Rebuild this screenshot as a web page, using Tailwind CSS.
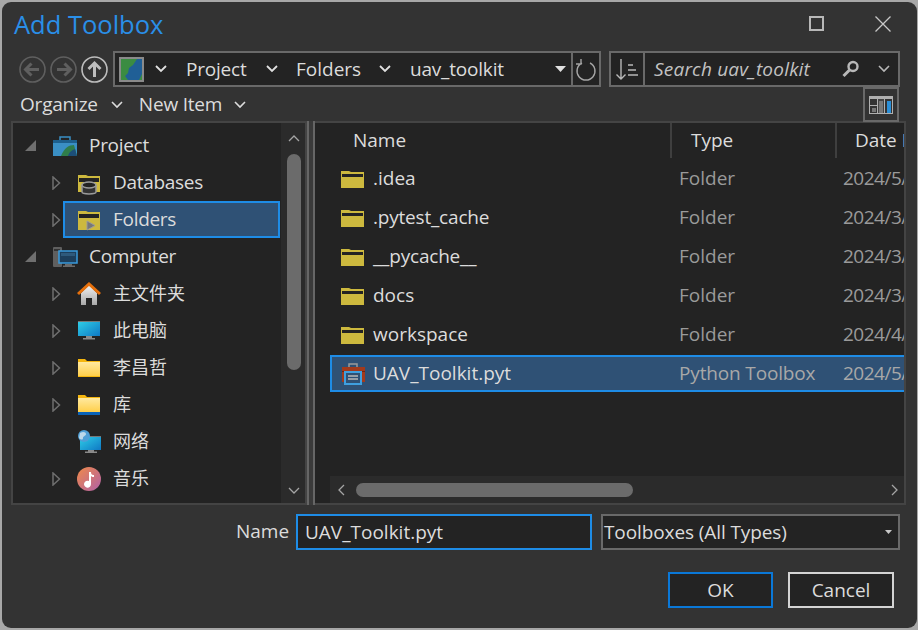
<!doctype html>
<html><head><meta charset="utf-8"><script src="https://cdn.jsdelivr.net/npm/@tailwindcss/browser@4"></script></head>
<body class="m-0 overflow-hidden">
<div class="w-[918px] h-[630px] bg-[#a8a8a8] pl-[2px] pr-[1px] pt-[2px] pb-[2px] font-['Open_Sans','Noto_Sans_CJK_SC',sans-serif] text-[19px] text-[#dcdcdc]">
<div class="w-full h-full bg-[#333333] rounded-[9px] flex flex-col overflow-hidden">

<!-- title -->
<div class="h-[49px] shrink-0 flex items-center pl-[12px] pr-[26px]">
  <span class="text-[25.500px] leading-none text-[#2a8fe8] flex-1 -mt-[4px]">Add Toolbox</span>
  <div class="w-[15px] h-[15px] border-2 border-[#b8b8b8] mr-[51px] mb-[6px]"></div>
  <svg class="mb-[6px]" width="16" height="16" viewBox="0 0 16 16" fill="none" stroke="#c8c8c8" stroke-width="1.3"><path d="M.5.5l15 15M15.500.5l-15 15"/></svg>
</div>

<!-- nav row -->
<div class="h-[36px] shrink-0 flex items-stretch pl-[17px]">
  <div class="w-[94px] flex items-center gap-[4px] shrink-0">
    <svg width="27" height="27" viewBox="0 0 27 27" fill="none" stroke="#5f5f5f"><circle cx="13.5" cy="13.5" r="12.5" stroke-width="1.6"/><path d="M20 13.5H7M12.5 7.5l-6 6 6 6" stroke-width="3"/></svg>
    <svg width="27" height="27" viewBox="0 0 27 27" fill="none" stroke="#5f5f5f"><circle cx="13.5" cy="13.5" r="12.5" stroke-width="1.6"/><path d="M7 13.5h13M14.5 7.5l6 6-6 6" stroke-width="3"/></svg>
    <svg width="27" height="27" viewBox="0 0 27 27" fill="none" stroke="#bdbdbd"><circle cx="13.5" cy="13.5" r="12.5" stroke-width="1.6"/><path d="M13.5 21V7M7.5 13l6-6 6 6" stroke-width="3"/></svg>
  </div>
  <div class="w-[460px] shrink-0 bg-[#232323] border-2 border-[#696969] flex items-center relative">
    <div class="ml-[4px] w-[25px] h-[25px] border-2 border-[#8a8a8a] bg-[#3b8c42] overflow-hidden shrink-0">
      <svg width="21" height="21" viewBox="0 0 21 21"><path d="M21 0H16L12 6 8 9 7 14 4 17 7 21H18L21 15Z" fill="#205f96"/></svg>
    </div>
    <svg class="ml-[11px] shrink-0" width="12" height="8" viewBox="0 0 12 8" fill="none" stroke="#e0e0e0" stroke-width="1.8"><path d="M1 1l5 5 5-5"/></svg>
    <span class="ml-[19px] w-[80px] shrink-0 tracking-[-0.2px]">Project</span>
    <svg class="shrink-0" width="12" height="8" viewBox="0 0 12 8" fill="none" stroke="#e0e0e0" stroke-width="1.8"><path d="M1 1l5 5 5-5"/></svg>
    <span class="ml-[18px] w-[83px] shrink-0">Folders</span>
    <svg class="shrink-0" width="12" height="8" viewBox="0 0 12 8" fill="none" stroke="#e0e0e0" stroke-width="1.8"><path d="M1 1l5 5 5-5"/></svg>
    <span class="ml-[19px] flex-1 tracking-[-0.2px]">uav_toolkit</span>
    <svg class="mr-[5px] shrink-0" width="11" height="6" viewBox="0 0 11 6"><path d="M0 0h11L5.500 6Z" fill="#e0e0e0"/></svg>
  </div>
  <div class="w-[30px] -ml-[2px] shrink-0 bg-[#232323] border-2 border-[#696969] flex items-center justify-center">
    <svg width="22" height="24" viewBox="0 0 22 24" fill="none" stroke="#a5a5a5" stroke-width="1.4"><path d="M7 5a9 9 0 1 0 8 0M6 1v5H1" transform="translate(0 1)"/></svg>
  </div>
  <div class="ml-[8px] w-[36px] shrink-0 bg-[#232323] border-2 border-[#696969] flex items-center justify-center">
    <svg width="26" height="26" viewBox="0 0 26 26" fill="none" stroke="#b8b8b8" stroke-width="1.4"><path d="M7 3v20M2.5 18.5 7 23l4.500-4.500M14 9h5M14 14h8M14 19h10"/></svg>
  </div>
  <div class="w-[257px] -ml-[2px] shrink-0 bg-[#232323] border-2 border-[#696969] flex items-center pl-[9px]">
    <span class="italic text-[#c2c2c2] flex-1 tracking-[0.2px]">Search uav_toolkit</span>
    <svg class="-ml-[8px]" width="18" height="18" viewBox="0 0 18 18" fill="none" stroke="#b8b8b8"><circle cx="11" cy="6.500" r="4.500" stroke-width="2.400"/><path d="M7.500 10 1.500 16" stroke-width="3"/></svg>
    <svg class="ml-[18px] mr-[8px]" width="12" height="8" viewBox="0 0 12 8" fill="none" stroke="#b8b8b8" stroke-width="1.6"><path d="M1 1l5 5 5-5"/></svg>
  </div>
</div>

<!-- organize row -->
<div class="h-[35px] shrink-0 flex items-center pl-[18px] relative tracking-[-0.2px]">
  <span>Organize</span>
  <svg class="ml-[13px]" width="12" height="8" viewBox="0 0 12 8" fill="none" stroke="#dcdcdc" stroke-width="1.6"><path d="M1 1l5 5 5-5"/></svg>
  <span class="ml-[16px]">New Item</span>
  <svg class="ml-[12px]" width="12" height="8" viewBox="0 0 12 8" fill="none" stroke="#dcdcdc" stroke-width="1.6"><path d="M1 1l5 5 5-5"/></svg>
  <div class="ml-auto mr-[18px] w-[36px] h-[35px] border-2 border-[#696969] flex items-center justify-center">
    <svg width="24" height="18" viewBox="0 0 24 18"><rect width="24" height="18" fill="#b0b0b0"/><rect x="1" y="3" width="7" height="6" fill="#333"/><rect x="1" y="10" width="7" height="7" fill="#333"/><rect x="3" y="12" width="4" height="4" fill="#777"/><rect x="9" y="3" width="6" height="14" fill="#444"/><rect x="10" y="5" width="4" height="12" fill="#777"/><rect x="16" y="3" width="7" height="14" fill="#333"/><rect x="18" y="5" width="4" height="12" fill="#2a8fd8"/></svg>
  </div>
</div>

<!-- panels -->
<div class="h-[384px] shrink-0 flex pl-[9px] pr-[11px] -mt-px">
  <!-- tree -->
  <div class="w-[296px] shrink-0 border-2 border-[#444444] bg-[#232323] flex tracking-[-0.3px]">
    <div class="flex-1 min-w-0 flex flex-col pt-[4px] pl-[2px]">
      <div class="h-[37px] flex items-center"><svg class="ml-[10px] mr-[17px]" width="11" height="11" viewBox="0 0 11 11"><path d="M11 0V11H0Z" fill="#6f6f6f"/></svg>
        <svg width="24" height="20" viewBox="0 0 24 20"><rect x="0" y="4" width="24" height="16" fill="#3a8fc4"/><path d="M7 4V1h10v3" fill="none" stroke="#3a8fc4" stroke-width="1.500"/><rect x="0" y="4" width="24" height="3" fill="#1d5f8c"/><path d="M8 20c3-8 8-11 13-11l3 11Z" fill="#2f7d4a"/><path d="M15 20c1-4 4-6 7-7l2 7Z" fill="#1c4e78"/></svg>
        <span class="ml-[12px]">Project</span></div>
      <div class="h-[37px] flex items-center"><svg class="ml-[37px] mr-[16px]" width="9" height="14" viewBox="0 0 9 14" fill="none" stroke="#6f6f6f" stroke-width="1.500"><path d="M1 1l6.500 6L1 13Z"/></svg>
        <svg width="24" height="24" viewBox="0 0 24 24"><path d="M1 4h8l2 1h12v16H1Z" fill="#cdb93e"/><rect x="2" y="7" width="20" height="4" fill="#232323"/><path d="M5 14v7c0 2.500 14 2.500 14 0v-7" fill="#333" stroke="#9a9a9a" stroke-width="1.500"/><ellipse cx="12" cy="14" rx="7" ry="3" fill="#232323" stroke="#9a9a9a" stroke-width="1.500"/></svg>
        <span class="ml-[12px]">Databases</span></div>
      <div class="h-[37px] flex items-center"><svg class="ml-[37px] mr-[-12px] shrink-0" width="9" height="14" viewBox="0 0 9 14" fill="none" stroke="#6f6f6f" stroke-width="1.500"><path d="M1 1l6.500 6L1 13Z"/></svg>
        <div class="h-[37px] w-[217px] ml-[14px] bg-[#2f5175] border-2 border-[#1e8ce6] flex items-center pl-[12px] shrink-0">
        <svg width="24" height="22" viewBox="0 0 24 22"><path d="M1 2h8l2 1h12v18H1Z" fill="#cdb93e"/><rect x="2" y="5" width="20" height="4" fill="#232323"/><path d="M10 12l8 4.500-8 4.500Z" fill="#777" stroke="#9a9a9a"/></svg>
        <span class="ml-[12px]">Folders</span></div></div>
      <div class="h-[37px] flex items-center"><svg class="ml-[10px] mr-[17px]" width="11" height="11" viewBox="0 0 11 11"><path d="M11 0V11H0Z" fill="#6f6f6f"/></svg>
        <svg width="25" height="20" viewBox="0 0 25 20"><rect x="0" y="0" width="9" height="20" rx="1" fill="#5f5f5f"/><rect x="1" y="2" width="6" height="2" fill="#333"/><rect x="6" y="4" width="18" height="12" fill="#1d3f5c" stroke="#3a9bdc" stroke-width="1.500"/><rect x="8" y="6" width="14" height="3" fill="#2e5a7c"/><path d="M12 17h7v1.500h3v1.500H10v-1.500h2Z" fill="#6a6a6a"/></svg>
        <span class="ml-[11px]">Computer</span></div>
      <div class="h-[37px] flex items-center"><svg class="ml-[37px] mr-[16px]" width="9" height="14" viewBox="0 0 9 14" fill="none" stroke="#6f6f6f" stroke-width="1.500"><path d="M1 1l6.500 6L1 13Z"/></svg>
        <svg width="24" height="24" viewBox="0 0 24 24"><defs><linearGradient id="h" x1="0" y1="0" x2="0" y2="1"><stop stop-color="#f2f2f2"/><stop offset="1" stop-color="#a8a8a8"/></linearGradient></defs><path d="M4 11 12 3l8 8v12h-5v-7H9v7H4Z" fill="url(#h)"/><path d="M1 12 12 2l11 10" fill="none" stroke="#e6700c" stroke-width="3"/></svg>
        <span class="ml-[12px] text-[18px] tracking-normal">主文件夹</span></div>
      <div class="h-[37px] flex items-center"><svg class="ml-[37px] mr-[16px]" width="9" height="14" viewBox="0 0 9 14" fill="none" stroke="#6f6f6f" stroke-width="1.500"><path d="M1 1l6.500 6L1 13Z"/></svg>
        <svg width="24" height="20" viewBox="0 0 24 20"><defs><linearGradient id="m" x1="0" y1="0" x2="1" y2="1"><stop stop-color="#2fd0e8"/><stop offset="1" stop-color="#0f78c4"/></linearGradient></defs><rect x="1" y="0" width="22" height="15" fill="url(#m)"/><rect x="1" y="0" width="22" height="1" fill="#777"/><path d="M9 15h6v2h3v1.500H6V17h3Z" fill="#8a8a8a"/></svg>
        <span class="ml-[12px] text-[18px] tracking-normal">此电脑</span></div>
      <div class="h-[37px] flex items-center"><svg class="ml-[37px] mr-[16px]" width="9" height="14" viewBox="0 0 9 14" fill="none" stroke="#6f6f6f" stroke-width="1.500"><path d="M1 1l6.500 6L1 13Z"/></svg>
        <svg width="24" height="18" viewBox="0 0 24 18"><defs><linearGradient id="f" x1="0" y1="0" x2="0" y2="1"><stop stop-color="#ffe9a0"/><stop offset="1" stop-color="#ffcf4a"/></linearGradient></defs><path d="M1 0h7l2 2h13v16H1Z" fill="#f5b60f"/><rect x="1" y="3" width="22" height="14" fill="url(#f)"/></svg>
        <span class="ml-[12px] text-[18px] tracking-normal">李昌哲</span></div>
      <div class="h-[37px] flex items-center"><svg class="ml-[37px] mr-[16px]" width="9" height="14" viewBox="0 0 9 14" fill="none" stroke="#6f6f6f" stroke-width="1.500"><path d="M1 1l6.500 6L1 13Z"/></svg>
        <svg width="24" height="20" viewBox="0 0 24 20"><path d="M1 0h7l2 2h13v18H1Z" fill="#f5b60f"/><rect x="1" y="3" width="22" height="14" fill="url(#f)"/><rect x="1" y="17" width="22" height="3" fill="#0a63b8"/></svg>
        <span class="ml-[12px] text-[18px] tracking-normal">库</span></div>
      <div class="h-[37px] flex items-center"><div class="w-[62px] shrink-0"></div>
        <svg width="24" height="24" viewBox="0 0 24 24"><rect x="3" y="6" width="21" height="14" fill="url(#m)"/><rect x="3" y="6" width="21" height="1" fill="#777"/><path d="M11 20h6v1.500h3V23H8v-1.500h3Z" fill="#8a8a8a"/><circle cx="7" cy="6" r="6" fill="#4f9fd6"/><path d="M3 3c3-2 6-1 6 1s-3 2-3 4-2 2-4 0Z" fill="#bcd8ea"/></svg>
        <span class="ml-[12px] text-[18px] tracking-normal">网络</span></div>
      <div class="h-[37px] flex items-center"><svg class="ml-[37px] mr-[16px]" width="9" height="14" viewBox="0 0 9 14" fill="none" stroke="#6f6f6f" stroke-width="1.500"><path d="M1 1l6.500 6L1 13Z"/></svg>
        <svg width="24" height="24" viewBox="0 0 24 24"><defs><linearGradient id="n" x1="0" y1="0" x2="1" y2="1"><stop stop-color="#f08a48"/><stop offset="1" stop-color="#b060a8"/></linearGradient></defs><circle cx="12" cy="12" r="12" fill="url(#n)"/><path d="M12 5h2c0 3 2 3 3 3v2c-1 0-2 0-3-1v8a3.500 3.500 0 1 1-2-3Z" fill="#fff"/></svg>
        <span class="ml-[12px] text-[18px] tracking-normal">音乐</span></div>
    </div>
    <div class="w-[24px] shrink-0 bg-[#2b2b2b] flex flex-col items-center pl-[2px]">
      <svg class="mt-[12px]" width="12" height="7" viewBox="0 0 12 7" fill="none" stroke="#a5a5a5" stroke-width="1.300"><path d="M1 6l5-5 5 5"/></svg>
      <div class="mt-[12px] w-[14px] h-[216px] rounded-[7px] bg-[#6b6b6b]"></div>
      <svg class="mt-auto mb-[9px]" width="12" height="7" viewBox="0 0 12 7" fill="none" stroke="#a5a5a5" stroke-width="1.300"><path d="M1 1l5 5 5-5"/></svg>
    </div>
  </div>
  <!-- splitter -->
  <div class="w-[8px] shrink-0 border-x-2 border-[#666666] bg-[#3a3a3a]"></div>
  <!-- list -->
  <div class="flex-1 min-w-0 border-y-2 border-r-2 border-[#444444] bg-[#232323] flex flex-col overflow-hidden">
    <div class="h-[35px] shrink-0 flex items-center">
      <div class="w-[357px] shrink-0 pl-[38px] h-full flex items-center border-r-2 border-[#3f3f3f]">Name</div>
      <div class="w-[165px] shrink-0 pl-[19px] h-full flex items-center border-r-2 border-[#3f3f3f]">Type</div>
      <div class="pl-[18px] whitespace-nowrap">Date Modified</div>
    </div>
    <div class="flex-1 flex flex-col pl-[15px] pt-[1px]">
      <div class="h-[39px] flex items-center whitespace-nowrap shrink-0"><svg class="ml-[11px] shrink-0" width="23" height="18" viewBox="0 0 23 18"><path d="M0 1h8l2 1h13v16H0Z" fill="#cdb93e"/><rect x="1" y="4" width="21" height="3" fill="#232323"/></svg><span class="ml-[9px] w-[306px] shrink-0">.idea</span><span class="w-[164px] shrink-0 text-[#9a9a9a]">Folder</span><span class="text-[#9a9a9a] tracking-[-0.5px] shrink-0">2024/5/</span></div>
      <div class="h-[39px] flex items-center whitespace-nowrap shrink-0"><svg class="ml-[11px] shrink-0" width="23" height="18" viewBox="0 0 23 18"><path d="M0 1h8l2 1h13v16H0Z" fill="#cdb93e"/><rect x="1" y="4" width="21" height="3" fill="#232323"/></svg><span class="ml-[9px] w-[306px] shrink-0 tracking-[-0.2px]">.pytest_cache</span><span class="w-[164px] shrink-0 text-[#9a9a9a]">Folder</span><span class="text-[#9a9a9a] tracking-[-0.5px] shrink-0">2024/3/</span></div>
      <div class="h-[39px] flex items-center whitespace-nowrap shrink-0"><svg class="ml-[11px] shrink-0" width="23" height="18" viewBox="0 0 23 18"><path d="M0 1h8l2 1h13v16H0Z" fill="#cdb93e"/><rect x="1" y="4" width="21" height="3" fill="#232323"/></svg><span class="ml-[9px] w-[306px] shrink-0 tracking-[-0.2px]">__pycache__</span><span class="w-[164px] shrink-0 text-[#9a9a9a]">Folder</span><span class="text-[#9a9a9a] tracking-[-0.5px] shrink-0">2024/3/</span></div>
      <div class="h-[39px] flex items-center whitespace-nowrap shrink-0"><svg class="ml-[11px] shrink-0" width="23" height="18" viewBox="0 0 23 18"><path d="M0 1h8l2 1h13v16H0Z" fill="#cdb93e"/><rect x="1" y="4" width="21" height="3" fill="#232323"/></svg><span class="ml-[9px] w-[306px] shrink-0">docs</span><span class="w-[164px] shrink-0 text-[#9a9a9a]">Folder</span><span class="text-[#9a9a9a] tracking-[-0.5px] shrink-0">2024/3/</span></div>
      <div class="h-[39px] flex items-center whitespace-nowrap shrink-0"><svg class="ml-[11px] shrink-0" width="23" height="18" viewBox="0 0 23 18"><path d="M0 1h8l2 1h13v16H0Z" fill="#cdb93e"/><rect x="1" y="4" width="21" height="3" fill="#232323"/></svg><span class="ml-[9px] w-[306px] shrink-0">workspace</span><span class="w-[164px] shrink-0 text-[#9a9a9a]">Folder</span><span class="text-[#9a9a9a] tracking-[-0.5px] shrink-0">2024/4/</span></div>
      <div class="h-[37px] mt-[1px] flex items-center whitespace-nowrap shrink-0 bg-[#2f5175] border-y-2 border-l-2 border-[#1e8ce6]"><svg class="ml-[9px] shrink-0" width="24" height="22" viewBox="0 0 24 22"><path d="M8 5V1h8v4" fill="none" stroke="#9a9a9a" stroke-width="1.500"/><rect x="1" y="4" width="23" height="15" fill="#a23a1c"/><rect x="1" y="8" width="23" height="1" fill="#6e2410"/><rect x="4" y="9" width="16" height="12" fill="#2f5175" stroke="#3fa0e0" stroke-width="2"/><path d="M7 13h10M7 16h10" stroke="#b8b8b8" stroke-width="1.500"/></svg><span class="ml-[8px] w-[306px] shrink-0">UAV_Toolkit.pyt</span><span class="w-[164px] shrink-0 text-[#a8a8a8] tracking-[-0.15px]">Python Toolbox</span><span class="text-[#a8a8a8] tracking-[-0.5px] shrink-0">2024/5/</span></div>
    </div>
    <div class="h-[27px] shrink-0 ml-[15px] bg-[#2b2b2b] flex items-center">
      <svg class="ml-[8px]" width="7" height="12" viewBox="0 0 7 12" fill="none" stroke="#a5a5a5" stroke-width="1.300"><path d="M6 1 1 6l5 5"/></svg>
      <div class="ml-[11px] w-[277px] h-[14px] rounded-[7px] bg-[#6b6b6b]"></div>
      <svg class="ml-auto mr-[6px]" width="7" height="12" viewBox="0 0 7 12" fill="none" stroke="#a5a5a5" stroke-width="1.300"><path d="M1 1l5 5-5 5"/></svg>
    </div>
  </div>
</div>

<!-- name row -->
<div class="mt-[9px] h-[36px] shrink-0 flex items-stretch">
  <span class="ml-[234px] w-[60px] flex items-center -mt-[1px]">Name</span>
  <div class="w-[296px] shrink-0 bg-[#232323] border-2 border-[#1e8ce6] flex items-center pl-[7px]">UAV_Toolkit.pyt</div>
  <div class="ml-[9px] w-[299px] shrink-0 bg-[#232323] border-2 border-[#696969] flex items-center">
    <span class="flex-1 pl-[1px] tracking-[-0.1px]">Toolboxes (All Types)</span>
    <svg class="mr-[6px]" width="7" height="4" viewBox="0 0 7 4"><path d="M0 0h7L3.500 4Z" fill="#c8c8c8"/></svg>
  </div>
</div>

<!-- buttons -->
<div class="mt-[22px] h-[36px] shrink-0 flex justify-end pr-[23px] gap-[15px]">
  <div class="w-[105px] bg-[#232323] border-2 border-[#0a78d8] flex items-center justify-center">OK</div>
  <div class="w-[106px] bg-[#232323] border-2 border-[#d4d4d4] flex items-center justify-center">Cancel</div>
</div>

</div></div>
</body></html>
